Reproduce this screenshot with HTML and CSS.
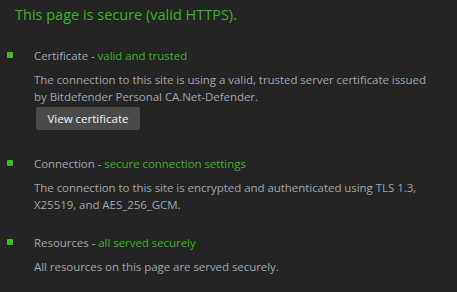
FILE: index.html
```html
<!DOCTYPE html>
<html lang="en">
<head>
  <meta charset="UTF-8">
  <title>Security</title>
  <link rel="stylesheet" href="styles.css">
</head>
<body>
  <h1 class="title">This page is secure (valid HTTPS).</h1>

  <div class="item">
    <span class="dot"></span>
    <div class="body">
      <div class="head">Certificate - <span class="ok">valid and trusted</span></div>
      <p class="desc">The connection to this site is using a valid, trusted server certificate issued by Bitdefender Personal CA.Net-Defender.</p>
      <button class="btn">View certificate</button>
    </div>
  </div>

  <div class="item">
    <span class="dot"></span>
    <div class="body">
      <div class="head">Connection - <span class="ok">secure connection settings</span></div>
      <p class="desc">The connection to this site is encrypted and authenticated using TLS 1.3, X25519, and AES_256_GCM.</p>
    </div>
  </div>

  <div class="item">
    <span class="dot"></span>
    <div class="body">
      <div class="head">Resources - <span class="ok">all served securely</span></div>
      <p class="desc">All resources on this page are served securely.</p>
    </div>
  </div>
</body>
</html>
```

FILE: styles.css
```css
* { margin: 0; padding: 0; box-sizing: border-box; }

body {
  background: #242424;
  font-family: 'Open Sans', 'Noto Sans', sans-serif;
  color: #9ea6b0;
  padding: 5px 0 0 7px;
  font-size: 11.5px;
  letter-spacing: -0.05px;
}

.title {
  font-size: 14.5px;
  line-height: 20px;
  font-weight: normal;
  color: #3cb520;
  margin-left: 8px;
  margin-bottom: 22px;
  letter-spacing: 0;
}

.item {
  display: flex;
  margin-bottom: 21px;
}

.dot {
  width: 6px;
  height: 6px;
  border-radius: 1px;
  background: #3cbf16;
  margin-top: 5px;
  flex-shrink: 0;
}

.body {
  margin-left: 21px;
  width: 400px;
}

.head {
  line-height: 17px;
  margin-bottom: 7px;
}

.ok { color: #3cb520; }

.desc {
  line-height: 17px;
}

.btn {
  display: block;
  margin: 2px 0 4px 2px;
  width: 104px;
  height: 23px;
  border: none;
  border-radius: 2px;
  background: #4a4a4a;
  color: #f4f4f4;
  font-family: inherit;
  font-size: 11.5px;
}
```
